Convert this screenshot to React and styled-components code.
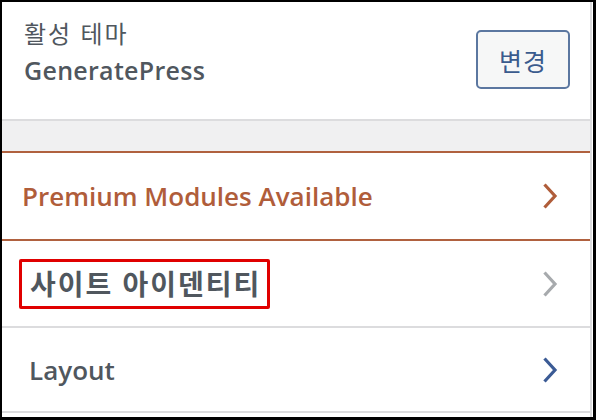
import styled, { createGlobalStyle } from "styled-components";

const GlobalStyle = createGlobalStyle`
	html, body {
		margin: 0;
		padding: 0;
		background: #fff;
	}
	body {
		font-family: "Open Sans", "Noto Sans CJK KR", sans-serif;
	}
`;

function Chevron({ color }) {
	return (
		<ChevronIcon width="16" height="28" viewBox="0 0 16 28">
			<polyline points="2.5,2.5 13,14 2.5,25.5" fill="none" stroke={color} strokeWidth="3.2" />
		</ChevronIcon>
	);
}

export default function App() {
	return (
		<>
			<GlobalStyle />
			<Frame>
				<Panel>
					<ThemeInfo>
						<div>
							<ThemeLabel>활성 테마</ThemeLabel>
							<ThemeName>GeneratePress</ThemeName>
						</div>
						<ChangeButton>변경</ChangeButton>
					</ThemeInfo>
					<Band />
					<PremiumRow>
						<PremiumTitle>Premium Modules Available</PremiumTitle>
						<Chevron color="#b05d3a" />
					</PremiumRow>
					<Row $height={85}>
						<Highlight>사이트 아이덴티티</Highlight>
						<Chevron color="#a7aaad" />
					</Row>
					<Row $height={83}>
						<RowTitle>Layout</RowTitle>
						<Chevron color="#3b5b95" />
					</Row>
				</Panel>
			</Frame>
		</>
	);
}

const Frame = styled.div`
	width: 596px;
	height: 420px;
	box-sizing: border-box;
	border-style: solid;
	border-color: #000;
	border-width: 2px 3px 3px 2px;
	display: flex;
	background: #fff;
`;

const Panel = styled.div`
	flex: 1;
	display: flex;
	flex-direction: column;
	border-right: 2px solid #dcdcde;
	margin-right: 1px;
`;

const ThemeInfo = styled.div`
	height: 119px;
	box-sizing: border-box;
	padding: 0 20px 0 22px;
	display: flex;
	justify-content: space-between;
	align-items: center;
	border-bottom: 2px solid #dcdcde;
`;

const ThemeLabel = styled.div`
	font-size: 24px;
	line-height: 32px;
	color: #50575e;
	letter-spacing: 2px;
	margin-top: -14px;
`;

const ThemeName = styled.div`
	font-size: 25px;
	line-height: 40px;
	font-weight: 600;
	color: #50575e;
	letter-spacing: 0.3px;
`;

const ChangeButton = styled.button`
	width: 94px;
	height: 59px;
	box-sizing: border-box;
	margin-top: -2px;
	border: 2px solid #5b77a0;
	border-radius: 5px;
	background: #f6f7f7;
	color: #3a5b8e;
	font-family: "Open Sans", "Noto Sans CJK KR", sans-serif;
	font-size: 25px;
	letter-spacing: 1px;
	padding: 0;
`;

const Band = styled.div`
	height: 30px;
	background: #f0f0f1;
`;

const PremiumRow = styled.div`
	height: 86px;
	border-top: 2px solid #b0613f;
	border-bottom: 2px solid #b0613f;
	padding: 0 32px 0 20px;
	display: flex;
	align-items: center;
	justify-content: space-between;
`;

const PremiumTitle = styled.span`
	font-size: 26px;
	font-weight: 600;
	color: #b05d3a;
`;

const Row = styled.div`
	height: ${(p) => p.$height}px;
	border-bottom: 2px solid #dcdcde;
	padding: 0 32px 0 27px;
	display: flex;
	align-items: center;
	justify-content: space-between;
`;

const RowTitle = styled.span`
	font-size: 26px;
	font-weight: 600;
	color: #50575e;
`;

const Highlight = styled.span`
	margin-left: -10px;
	border: 3px solid #e00000;
	border-radius: 2px;
	padding: 0 6px 0 8px;
	height: 44px;
	line-height: 44px;
	font-size: 28px;
	font-weight: 700;
	letter-spacing: 2px;
	color: #50575e;
`;

const ChevronIcon = styled.svg`
	display: block;
	flex-shrink: 0;
`;
